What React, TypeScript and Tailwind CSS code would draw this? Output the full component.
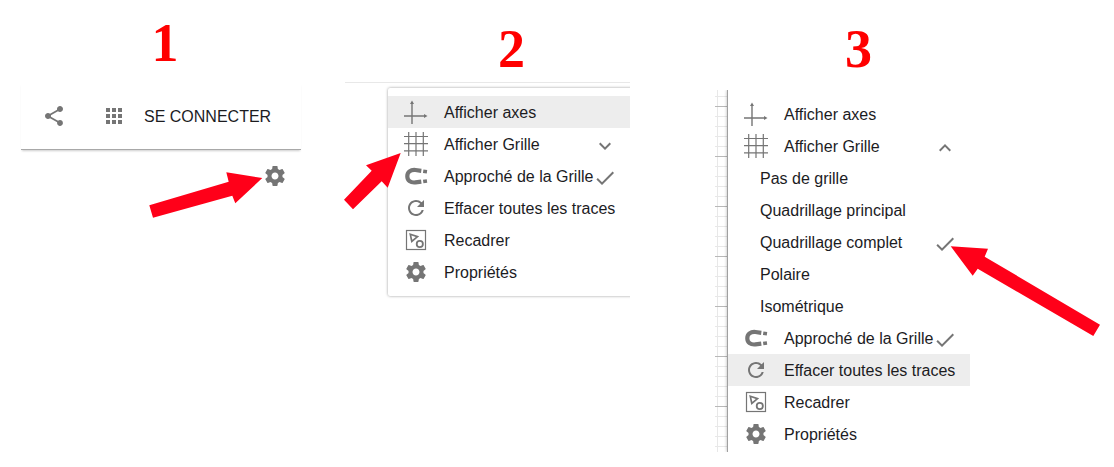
import type { ReactNode } from "react";
import { MdApps, MdCheck, MdExpandLess, MdExpandMore, MdRefresh, MdShare } from "react-icons/md";

type Item = {
  label: string;
  icon?: ReactNode;
  mark?: ReactNode;
  active?: boolean;
};

const check = <MdCheck size={24} />;

export default function App() {
  return (
    <main className="grid grid-cols-[minmax(0,324fr)_minmax(0,370fr)_minmax(0,399fr)] bg-white pl-[21px] font-['Liberation_Sans',sans-serif] text-base text-[#1c1c1f]">
      <section className="relative pt-4 pr-11">
        <Step className="pl-2">1</Step>
        <header className="mt-[13px] flex h-[67px] items-center border-b border-[#a8a8a8] pl-[21px] text-[#757575] shadow-[0_2px_2px_-1px_rgba(0,0,0,0.2)]">
          <button aria-label="Partager">
            <MdShare size={24} />
          </button>
          <button aria-label="Applications" className="ml-9">
            <MdApps size={24} />
          </button>
          <a href="#connexion" className="ml-[18px] pt-0.5 whitespace-nowrap text-[#1c1c1f]">
            SE CONNECTER
          </a>
        </header>
        <div className="flex justify-end pt-[14px] pr-[14px] text-[#757575]">
          <button aria-label="Paramètres">
            <GearIcon />
          </button>
        </div>
        <Arrow
          className="absolute top-[172px] left-32"
          width={114}
          height={46}
          points="0.3,33.3 4,45.7 83.3,23.7 86.3,31.3 113.3,6 77.3,0.3 79.7,9.7"
        />
      </section>

      <section className="relative pt-[22px] pr-[85px]">
        <Step className="pl-12">2</Step>
        <div className="mt-1.5 overflow-hidden border-t border-[#e8e8e8] pt-[5px] pb-2 pl-[43px]">
          <div className="-mr-2 rounded-xs bg-white py-2 pr-2 shadow-[0_0_3px_rgba(0,0,0,0.4)]">
            <Menu
              items={[
                { label: "Afficher axes", icon: <AxesIcon />, active: true },
                { label: "Afficher Grille", icon: <GridIcon />, mark: <MdExpandMore size={24} /> },
                { label: "Approché de la Grille", icon: <MagnetIcon />, mark: check },
                { label: "Effacer toutes les traces", icon: <MdRefresh size={24} /> },
                { label: "Recadrer", icon: <FitIcon /> },
                { label: "Propriétés", icon: <GearIcon /> },
              ]}
            />
          </div>
        </div>
        <Arrow
          className="absolute top-[153px] -left-px"
          width={57}
          height={57}
          points="56.7,0 22,12.3 27.7,17.7 0,46.7 9,56.3 37.7,28.3 43.7,34.7"
        />
      </section>

      <section className="relative pt-[22px] pr-36">
        <Step className="pl-8">3</Step>
        <div className="mt-3.5 flex overflow-hidden">
          <Sheet />
          <div className="min-w-0 flex-1 border-l border-[#a0a0a0] bg-white pt-2 pb-0.5 shadow-[0_0_3px_rgba(0,0,0,0.3)]">
            <Menu
              items={[
                { label: "Afficher axes", icon: <AxesIcon /> },
                { label: "Afficher Grille", icon: <GridIcon />, mark: <MdExpandLess size={24} /> },
                { label: "Pas de grille" },
                { label: "Quadrillage principal" },
                { label: "Quadrillage complet", mark: check },
                { label: "Polaire" },
                { label: "Isométrique" },
                { label: "Approché de la Grille", icon: <MagnetIcon />, mark: check },
                { label: "Effacer toutes les traces", icon: <MdRefresh size={24} />, active: true },
                { label: "Recadrer", icon: <FitIcon /> },
                { label: "Propriétés", icon: <GearIcon /> },
              ]}
            />
          </div>
        </div>
        <Arrow
          className="absolute top-[246px] left-[235px]"
          width={151}
          height={91}
          points="0.7,0.3 38,2.7 34.7,10.7 150,78.7 143.3,90 27.7,22.7 22.7,29.7"
        />
      </section>
    </main>
  );
}

function Step({ children, className }: { children: ReactNode; className: string }) {
  return (
    <h2
      className={`text-center font-['Liberation_Serif',serif] text-[54px] leading-[54px] font-bold text-[#ff0000] ${className}`}
    >
      {children}
    </h2>
  );
}

function Menu({ items }: { items: Item[] }) {
  return (
    <ul>
      {items.map((item) => (
        <li key={item.label}>
          <button
            className={`flex h-8 w-full items-center pr-[13px] text-left whitespace-nowrap ${
              item.icon ? "pl-4" : "pl-8"
            } ${item.active ? "bg-[#ededed]" : ""}`}
          >
            {item.icon && <span className="mr-4 shrink-0 text-[#757575]">{item.icon}</span>}
            <span className="min-w-0 flex-1 pt-0.5">{item.label}</span>
            {item.mark && <span className="shrink-0 pt-1 text-[#757575]">{item.mark}</span>}
          </button>
        </li>
      ))}
    </ul>
  );
}

type ArrowProps = { className: string; width: number; height: number; points: string };

function Arrow({ className, width, height, points }: ArrowProps) {
  return (
    <svg className={className} width={width} height={height} aria-hidden="true">
      <polygon points={points} fill="#ff0019" />
    </svg>
  );
}

// strip of graph paper visible beside the menu
function Sheet() {
  return (
    <svg className="w-3 shrink-0 self-stretch" aria-hidden="true">
      <defs>
        <pattern id="sheet" width="50" height="50" y="16" patternUnits="userSpaceOnUse">
          <path d="M0 10.5h50M0 20.5h50M0 30.5h50M0 40.5h50M2.5 0v50" stroke="#e8e8e8" />
          <path d="M0 .5h50" stroke="#b8b8b8" />
        </pattern>
      </defs>
      <rect width="100%" height="100%" fill="url(#sheet)" />
    </svg>
  );
}

function AxesIcon() {
  return (
    <svg width="24" height="24" viewBox="0 0 24 24" fill="none" stroke="currentColor">
      <path d="M8 2v22M0 16h22" strokeWidth="1.4" />
      <path d="M8 .5 10 4H6zM23.5 16 20 18v-4z" fill="currentColor" stroke="none" />
    </svg>
  );
}

function GridIcon() {
  return (
    <svg width="24" height="24" viewBox="0 0 24 24" fill="none" stroke="currentColor">
      <path d="M4.7 0v24M12 0v24M19.3 0v24M0 4.5h24M0 11.7h24M0 18.9h24" strokeWidth="1.2" />
    </svg>
  );
}

function MagnetIcon() {
  return (
    <svg width="24" height="24" viewBox="0 0 24 24" fill="none" stroke="currentColor">
      <path d="M17.3 6.8 11.5 6C6.5 5.5 3.3 8 3.3 12.2s3.2 6.8 8.2 6.2l5.8-.8" strokeWidth="4.2" />
      <path d="m19.2 7.2 3.8.5M19.2 17.4l3.8-.5" strokeWidth="3.5" />
    </svg>
  );
}

function FitIcon() {
  return (
    <svg width="24" height="24" viewBox="0 0 24 24" fill="none" stroke="currentColor">
      <rect x="2.5" y="2.5" width="19" height="19" strokeWidth="1.2" />
      <path d="m6.3 6.3 7.2 2.4-5.7 4.8z" strokeWidth="1.7" />
      <circle cx="15.8" cy="16" r="3.1" strokeWidth="1.8" />
    </svg>
  );
}

function GearIcon() {
  return (
    <svg width="24" height="24" viewBox="0 0 24 24" fill="currentColor">
      <path d="M19.43 12.98c.04-.32.07-.64.07-.98s-.03-.66-.07-.98l2.11-1.65c.19-.15.24-.42.12-.64l-2-3.46c-.12-.22-.39-.3-.61-.22l-2.49 1c-.52-.4-1.08-.73-1.69-.98l-.38-2.65C14.46 2.18 14.25 2 14 2h-4c-.25 0-.46.18-.49.42l-.38 2.65c-.61.25-1.17.59-1.69.98l-2.49-1c-.23-.09-.49 0-.61.22l-2 3.46c-.13.22-.07.49.12.64l2.11 1.65c-.04.32-.07.65-.07.98s.03.66.07.98l-2.11 1.65c-.19.15-.24.42-.12.64l2 3.46c.12.22.39.3.61.22l2.49-1c.52.4 1.08.73 1.69.98l.38 2.65c.03.24.24.42.49.42h4c.25 0 .46-.18.49-.42l.38-2.65c.61-.25 1.17-.59 1.69-.98l2.49 1c.23.09.49 0 .61-.22l2-3.46c.12-.22.07-.49-.12-.64l-2.11-1.65zM12 15.5c-1.93 0-3.5-1.57-3.5-3.5s1.57-3.5 3.5-3.5 3.5 1.57 3.5 3.5-1.57 3.5-3.5 3.5z" />
    </svg>
  );
}
